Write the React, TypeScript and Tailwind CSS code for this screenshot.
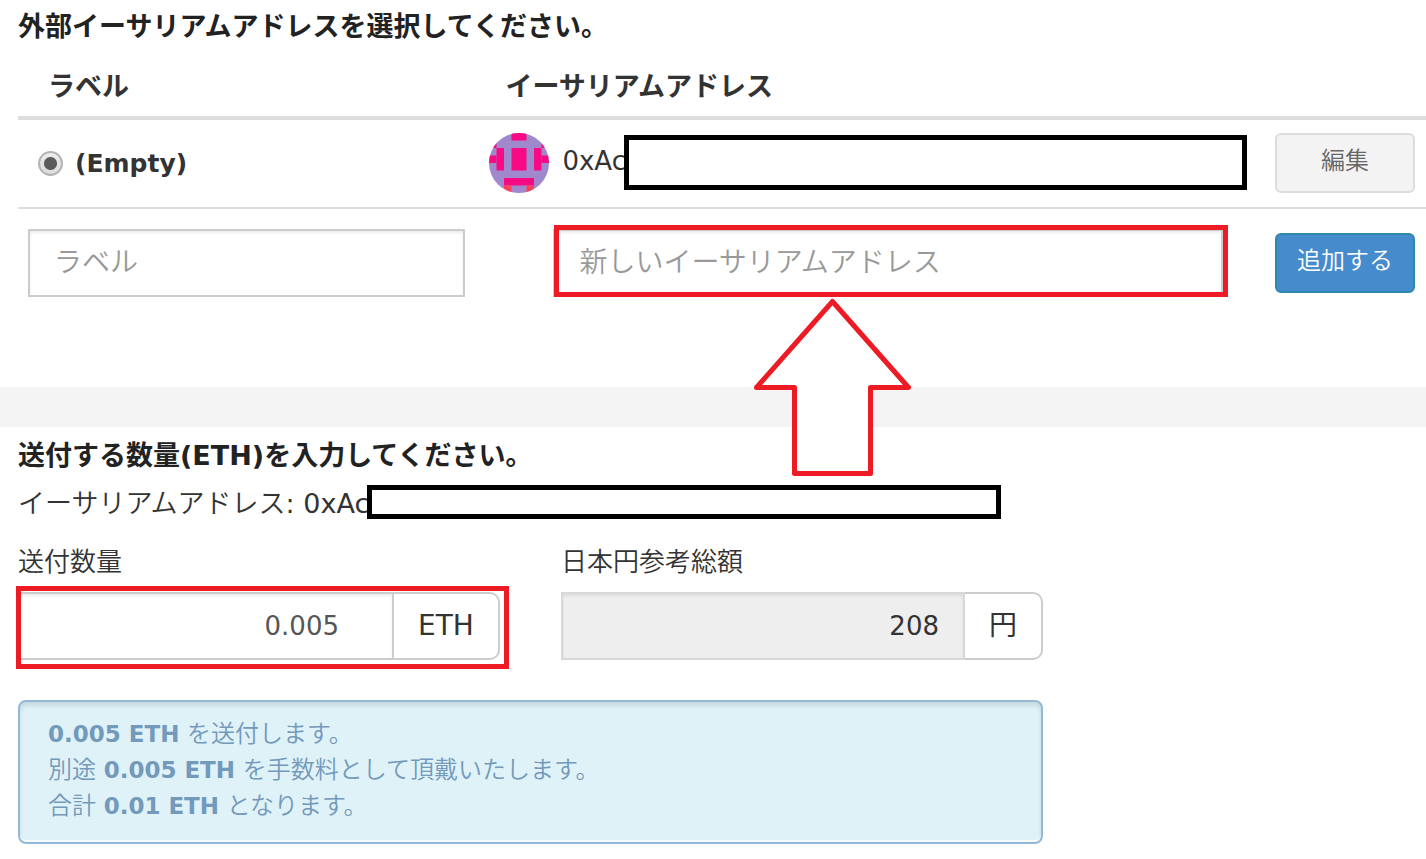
import React from "react";

const PINK = "#f80a84";
const RED = "#ff4058";

const avatarCells: [number, number, number, number, string][] = [
  [3, 0, 2, 1, PINK],
  [0, 1, 1, 1, PINK],
  [7, 1, 1, 1, PINK],
  [1, 2, 1, 3, PINK],
  [3, 2, 2, 3, PINK],
  [6, 2, 1, 3, PINK],
  [0, 3, 1, 1, PINK],
  [7, 3, 1, 1, PINK],
  [2, 6, 4, 1, PINK],
  [2, 7, 1, 1, RED],
  [5, 7, 1, 1, RED],
];

function Avatar() {
  return (
    <svg viewBox="0 0 8 8" className="size-[60px] shrink-0 rounded-full bg-[#a088cd]" aria-hidden="true">
      {avatarCells.map(([x, y, w, h, fill]) => (
        <rect key={`${x}-${y}`} x={x} y={y} width={w} height={h} fill={fill} />
      ))}
    </svg>
  );
}

function UpArrow() {
  return (
    <svg
      viewBox="0 0 165 183"
      className="pointer-events-none absolute top-full left-[197px] z-10 h-[183px] w-[165px]"
      aria-hidden="true"
    >
      <path
        d="M82.5 4.5 L158.5 90.5 H120.5 V176.5 H44.5 V90.5 H6.5 Z"
        fill="#fff"
        stroke="#ed1c24"
        strokeWidth="5"
        strokeLinejoin="round"
      />
    </svg>
  );
}

const field =
  "h-[68px] w-full min-w-0 border-2 border-[#cccccc] bg-white px-6 text-[28px] shadow-[inset_0_2px_3px_rgba(0,0,0,0.08)] outline-none placeholder:text-[#999999] placeholder:opacity-100";

const addon =
  "flex h-[68px] shrink-0 items-center justify-center rounded-r-[10px] border-2 border-l-0 border-[#cccccc] bg-white text-[28px]";

export default function App() {
  return (
    <main className="min-h-screen overflow-x-hidden bg-white pb-[15px] font-['DejaVu_Sans','Noto_Sans_CJK_JP',sans-serif] text-[26px] leading-9 text-[#333333]">
      <section className="h-[387px] pt-[9px] pl-[18px]">
        <h2 className="text-[27px] font-bold text-[#222222]">
          外部イーサリアムアドレスを選択してください。
        </h2>
        <table className="mt-2 w-full table-fixed border-collapse text-left">
          <colgroup>
            <col className="w-[32.77%]" />
            <col />
            <col className="w-[161px]" />
          </colgroup>
          <thead>
            <tr className="h-[65px] border-b-4 border-[#dddddd] text-[27px]">
              <th className="pt-1 pl-[30px]">ラベル</th>
              <th className="pt-1 pl-[26px]">イーサリアムアドレス</th>
              <th />
            </tr>
          </thead>
          <tbody>
            <tr className="h-[90px] border-b-2 border-[#dddddd]">
              <td className="pl-5">
                <label className="flex items-center gap-3 text-[25px] font-bold">
                  <input
                    type="radio"
                    name="address"
                    defaultChecked
                    className="size-[25px] appearance-none rounded-full border-2 border-[#b4b4b4] bg-[radial-gradient(circle,#5c5c5c_6px,transparent_7px),linear-gradient(#eeeeee,#dcdcdc)]"
                  />
                  (Empty)
                </label>
              </td>
              <td className="pr-[18px] pb-0.5 pl-[10px]">
                <div className="flex items-center">
                  <Avatar />
                  <span className="pb-1 pl-[13px]">0xAc</span>
                  <span className="-ml-0.5 h-[55px] flex-1 border-[5px] border-black bg-white" />
                </div>
              </td>
              <td className="pb-0.5 pl-[10px]">
                <button
                  type="button"
                  className="block h-[60px] w-[140px] rounded-md border-2 border-[#dddddd] bg-[#f3f3f3] pb-1 text-2xl font-[350] text-[#666666]"
                >
                  編集
                </button>
              </td>
            </tr>
            <tr className="h-[108px]">
              <td className="pr-[14px] pl-[10px]">
                <input type="text" aria-label="ラベル" placeholder="ラベル" className={`${field} block font-[350]`} />
              </td>
              <td className="pr-[42px] pl-[74px]">
                <div className="relative">
                  <input
                    type="text"
                    aria-label="新しいイーサリアムアドレス"
                    placeholder="新しいイーサリアムアドレス"
                    className={`${field} block font-[350]`}
                  />
                  <span className="pointer-events-none absolute -top-1 -right-[5px] bottom-0 left-px border-[5px] border-[#ed1c24]" />
                  <UpArrow />
                </div>
              </td>
              <td className="pl-[10px]">
                <button
                  type="button"
                  className="block h-[60px] w-[140px] rounded-md border-2 border-[#2d87ae] bg-[#468ccc] pb-1 text-2xl font-[350] text-white"
                >
                  追加する
                </button>
              </td>
            </tr>
          </tbody>
        </table>
      </section>

      <div className="h-10 bg-[#f4f4f4]" />

      <section className="px-[18px] pt-[11px]">
        <h2 className="text-[27px] font-bold text-[#222222]">送付する数量(ETH)を入力してください。</h2>
        <div className="mt-2 flex max-w-[983px] items-center text-[27px]">
          <span className="pt-1">
            <span className="font-[350]">イーサリアムアドレス</span>: 0xAc
          </span>
          <span className="-ml-0.5 h-[34px] flex-1 border-[5px] border-black bg-white" />
        </div>

        <div className="mt-[22px] grid max-w-[1025px] grid-cols-2 gap-[61px]">
          <div>
            <label htmlFor="amount" className="block font-[350]">
              送付数量
            </label>
            <div className="relative mt-3 flex">
              <input
                id="amount"
                type="text"
                defaultValue="0.005"
                className="h-[68px] min-w-0 flex-1 border-2 border-[#cccccc] bg-white pr-[53px] text-right text-[26px] text-[#555555] shadow-[inset_0_2px_3px_rgba(0,0,0,0.08)] outline-none"
              />
              <span className={`${addon} w-[106px]`}>ETH</span>
              <span className="pointer-events-none absolute -top-1.5 -right-[9px] -bottom-[9px] -left-0.5 border-[5px] border-[#ed1c24]" />
            </div>
          </div>
          <div>
            <label htmlFor="total" className="block font-[350]">
              日本円参考総額
            </label>
            <div className="mt-3 flex">
              <input
                id="total"
                type="text"
                readOnly
                defaultValue="208"
                className="h-[68px] min-w-0 flex-1 border-2 border-[#d8d8d8] bg-[#eeeeee] pr-6 text-right text-[26px] shadow-[inset_0_2px_3px_rgba(0,0,0,0.08)] outline-none"
              />
              <span className={`${addon} w-[78px]`}>円</span>
            </div>
          </div>
        </div>

        <div className="mt-10 max-w-[1025px] rounded-lg border-2 border-[#94b9d6] bg-[#dff2f8] px-7 pt-[14px] pb-[18px] text-2xl leading-9 font-[350] text-[#7399bb] shadow-[inset_0_4px_4px_rgba(0,0,0,0.1),inset_0_-2px_0_rgba(255,255,255,0.7)]">
          <p>
            <strong className="text-[23px] font-bold">0.005 ETH</strong> を送付します。
          </p>
          <p>
            別途 <strong className="text-[23px] font-bold">0.005 ETH</strong> を手数料として頂戴いたします。
          </p>
          <p>
            合計 <strong className="text-[23px] font-bold">0.01 ETH</strong> となります。
          </p>
        </div>
      </section>
    </main>
  );
}
